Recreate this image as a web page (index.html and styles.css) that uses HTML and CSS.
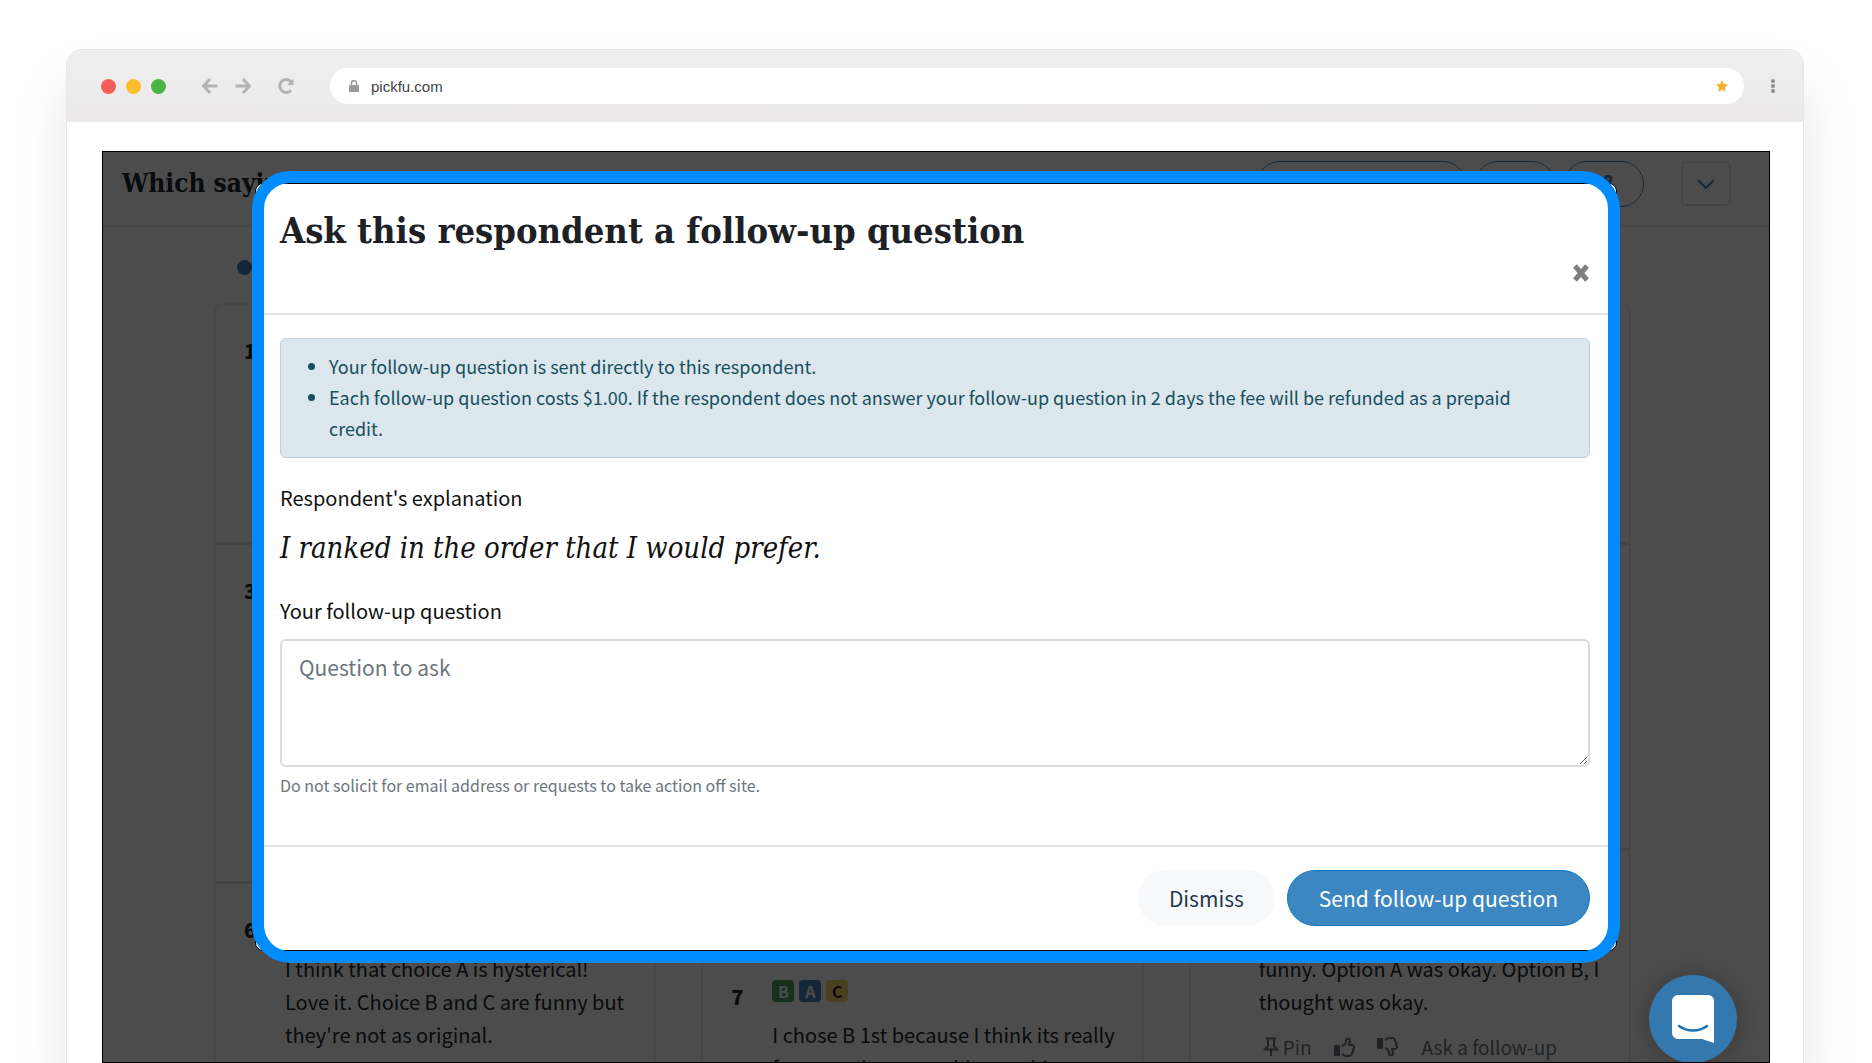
FILE: index.html
```html
<!DOCTYPE html>
<html lang="en">
<head>
  <meta charset="UTF-8" />
  <meta name="viewport" content="width=device-width, initial-scale=1.0" />
  <title>PickFu</title>
  <link rel="stylesheet" href="styles.css">
</head>
<body>
  <div class="browser">
    <div class="toolbar">
      <div class="lights">
        <span class="light red"></span>
        <span class="light yellow"></span>
        <span class="light green"></span>
      </div>
      <div class="nav">
        <button aria-label="Back"><svg width="16" height="16" viewBox="0 0 16 16"><path d="M15.500 8H2M8 1 1.500 8 8 15"/></svg></button>
        <button aria-label="Forward"><svg width="16" height="16" viewBox="0 0 16 16"><path d="M.500 8H14M8 1l6.500 7L8 15"/></svg></button>
        <button class="reload" aria-label="Reload"><svg width="16" height="16" viewBox="0 0 16 16"><path d="M13 12.200A6.400 6.400 0 1 1 13 3.800"/><path class="solid" d="M15.500.500V7H9z"/></svg></button>
      </div>
      <div class="address">
        <svg width="10" height="12" viewBox="0 0 10 12"><rect x="0" y="5" width="10" height="7" rx="1" fill="#999"/><path d="M2.500 5V3.200a2.500 2.500 0 0 1 5 0V5" fill="none" stroke="#999" stroke-width="1.500"/></svg>
        <input type="text" value="pickfu.com" aria-label="Address">
        <svg width="12" height="12" viewBox="0 0 12 12"><path d="M6 0l1.800 3.900 4.200.5-3.100 2.900.8 4.400L6 9.500l-3.700 2.200.8-4.400L0 4.400l4.200-.5z" fill="#fbab2e"/></svg>
      </div>
      <button class="menu" aria-label="Menu"><svg width="4" height="16" viewBox="0 0 4 16"><circle cx="2" cy="3" r="2"/><circle cx="2" cy="8" r="2"/><circle cx="2" cy="13" r="2"/></svg></button>
    </div>

    <div class="page">
      <header class="poll-header">
        <h1>Which saying</h1>
        <div class="actions">
          <button class="pill wide" aria-label="Results"></button>
          <button class="pill" aria-label="Save"></button>
          <button class="pill" aria-label="Share"><svg width="24" height="24" viewBox="0 0 24 24"><circle cx="16" cy="4" r="3"/><circle cx="6" cy="12" r="3"/><circle cx="16" cy="20" r="3"/><path d="M9 10l4-4M9 14l4 4"/></svg></button>
          <button class="more" aria-label="More"><svg width="18" height="10" viewBox="0 0 18 10"><path d="M1 1l8 8 8-8"/></svg></button>
        </div>
      </header>

      <main class="responses">
        <div class="legend"><span class="dot"></span></div>
        <div class="columns">
          <div class="column">
            <article class="card first"><b class="num">1</b></article>
            <article class="card third"><b class="num">3</b></article>
            <article class="card">
              <b class="num">6</b>
              <p class="answer lower">I think that choice A is hysterical! Love it. Choice B and C are funny but they're not as original.</p>
            </article>
          </div>
          <div class="column">
            <article class="card upper"></article>
            <article class="card">
              <b class="num">7</b>
              <div class="answer">
                <div class="ranks"><span class="rank b">B</span><span class="rank a">A</span><span class="rank c">C</span></div>
                <p>I chose B 1st because I think its really funny saying something to this to</p>
              </div>
            </article>
          </div>
          <div class="column">
            <article class="card first"></article>
            <article class="card fifth"></article>
            <article class="card last">
              <div class="answer">
                <p>funny. Option A was okay. Option B, I thought was okay.</p>
                <div class="tools">
                  <button><svg width="16" height="20" viewBox="0 0 16 20"><path d="M3 1.500h10M5 2v7l-3 3.500h12L11 9V2M8 12.500V19"/></svg>Pin</button>
                  <button aria-label="Like"><svg width="21" height="20" viewBox="0 0 21 20"><rect class="solid" x="0" y="8" width="6" height="11" rx="1"/><path d="M8 9c3-1 4-3 4-5 0-3 4-3 4 0 0 2-1 3-1 4h3c2 0 3 2 1 4 1 2 0 3-1 4 0 2-1 3-3 3h-3c-2 0-3-1-4-2"/></svg></button>
                  <button aria-label="Dislike"><svg width="21" height="20" viewBox="0 0 21 20"><rect class="solid" x="0" y="1" width="6" height="11" rx="1"/><path d="M8 3c1-1 2-2 4-2h3c2 0 3 1 3 3 1 1 2 2 1 4 2 2 1 4-1 4h-3c0 1 1 2 1 4 0 3-4 3-4 0 0-2-1-4-4-5"/></svg></button>
                  <a href="#">Ask a follow-up</a>
                </div>
              </div>
            </article>
          </div>
        </div>
      </main>

      <div class="backdrop"></div>

      <section class="modal" role="dialog" aria-labelledby="modal-title">
        <div class="modal-header">
          <h2 id="modal-title">Ask this respondent a follow-up question</h2>
          <button class="close" aria-label="Close"><svg width="18" height="18" viewBox="0 0 18 18"><path d="M3 2l12 14M15 2L3 16"/></svg></button>
        </div>
        <div class="modal-body">
          <ul class="alert">
            <li>Your follow-up question is sent directly to this respondent.</li>
            <li>Each follow-up question costs $1.00. If the respondent does not answer your follow-up question in 2 days the fee will be refunded as a prepaid credit.</li>
          </ul>
          <p class="label">Respondent's explanation</p>
          <blockquote>I ranked in the order that I would prefer.</blockquote>
          <label class="label" for="question">Your follow-up question</label>
          <textarea id="question" placeholder="Question to ask"></textarea>
          <p class="help">Do not solicit for email address or requests to take action off site.</p>
        </div>
        <div class="modal-footer">
          <button class="btn light-btn">Dismiss</button>
          <button class="btn primary">Send follow-up question</button>
        </div>
      </section>

      <button class="chat" aria-label="Open chat"><svg width="42" height="48" viewBox="0 0 42 48"><path d="M6 0h30a6 6 0 0 1 6 6v42l-12-4H6a6 6 0 0 1-6-6V6a6 6 0 0 1 6-6z" fill="#fff"/><path d="M7 31c8 6 20 6 28 0" fill="none" stroke="#1c72b4" stroke-width="2.500" stroke-linecap="round"/></svg></button>
    </div>
  </div>
</body>
</html>
```
FILE: styles.css
```css
:root {
  --blue: #3c87c2;
  --ring: #008cff;
  --line: #e3e6e9;
  --sans: "Noto Sans CJK SC", "Open Sans", sans-serif;
  --serif: "DejaVu Serif Condensed", "DejaVu Serif", serif;
}

* {
  box-sizing: border-box;
}
body {
  margin: 0;
  height: 100vh;
  padding: 49px 68px 0 66px;
  overflow: hidden;
  background: #fff;
  font-family: var(--sans);
}
button {
  font-family: inherit;
  background: none;
  border: none;
  padding: 0;
  cursor: pointer;
}
svg {
  display: block;
}
h1, h2, p, ul, blockquote {
  margin: 0;
}

/* --- browser --- */
.browser {
  display: flex;
  flex-direction: column;
  height: 100%;
  border: 1px solid #e6e6e6;
  border-bottom: none;
  border-radius: 16px 16px 0 0;
  box-shadow: 0 36px 56px rgba(0, 0, 0, 0.1);
  background: #fff;
}
.toolbar {
  display: flex;
  align-items: center;
  flex: none;
  height: 72px;
  padding: 0 28px 0 34px;
  border-radius: 15px 15px 0 0;
  background: linear-gradient(#f0efef, #ebe9ea);
}
.lights {
  display: flex;
  gap: 10px;
}
.light {
  width: 15px;
  height: 15px;
  border-radius: 50%;
}
.red { background: #f25f58; }
.yellow { background: #fdbe2d; }
.green { background: #4bb543; }
.nav {
  display: flex;
  gap: 17px;
  margin-left: 36px;
}
.nav svg {
  fill: none;
  stroke: #b3b3b3;
  stroke-width: 3;
}
.nav .solid {
  fill: #b3b3b3;
  stroke: none;
}
.nav .reload {
  margin-left: 10px;
}
.address {
  display: flex;
  align-items: center;
  flex: 1;
  height: 36px;
  margin: 0 27px 0 36px;
  padding: 0 16px 0 19px;
  border-radius: 18px;
  background: #fff;
}
.address input {
  flex: 1;
  border: none;
  padding: 0 12px;
  background: none;
  outline: none;
  color: #444;
  font: 15px "Liberation Sans", Arial, sans-serif;
}
.menu svg {
  fill: #8c8c8c;
}

/* --- page behind the modal --- */
.page {
  position: relative;
  flex: 1;
  min-height: 0;
  margin: 29px 33px 0 35px;
  border: 1px solid #000;
  overflow: hidden;
  color: #212529;
}
.poll-header {
  display: flex;
  justify-content: space-between;
  height: 75px;
  padding: 9px 38px 0 19px;
  border-bottom: 2px solid #e9ecef;
}
.poll-header h1 {
  font: bold 26px/44px var(--serif);
}
.actions {
  display: flex;
  gap: 9px;
}
.pill {
  display: flex;
  justify-content: center;
  width: 80px;
  height: 46px;
  padding-top: 13px;
  border: 1px solid var(--blue);
  border-radius: 23px;
}
.pill.wide {
  width: 209px;
}
.actions svg {
  fill: none;
  stroke: var(--blue);
  stroke-width: 3;
}
.actions .more {
  display: flex;
  align-items: center;
  justify-content: center;
  width: 50px;
  height: 45px;
  margin-left: 28px;
  border: 2px solid #e2e5e8;
  border-radius: 5px;
}
.more svg {
  stroke-width: 2;
}
.responses {
  padding: 33px 138px 0 111px;
}
.legend {
  height: 43px;
  padding-left: 23px;
}
.dot {
  display: block;
  width: 15px;
  height: 15px;
  border-radius: 50%;
  background: var(--blue);
}
.columns {
  display: grid;
  grid-template-columns: repeat(3, 1fr);
  gap: 45px;
  height: 800px;
}
.column {
  display: flex;
  flex-direction: column;
  border: 2px solid #eceef0;
  border-radius: 8px;
}
.card {
  display: flex;
  padding: 29px 20px 0 28px;
  font-size: 20px;
  line-height: 33px;
}
.card + .card {
  border-top: 3px solid #e2e5e8;
}
.first { height: 237px; }
.third { height: 339px; }
.fifth { height: 306px; }
.upper { height: 643px; }
.num {
  flex: none;
  width: 41px;
  font-weight: 900;
}
.lower {
  padding-top: 39px;
  padding-right: 8px;
}
.last {
  padding: 101px 10px 0 68px;
}
.ranks {
  display: flex;
  gap: 5px;
  padding-bottom: 16px;
}
.rank {
  width: 22px;
  height: 22px;
  border-radius: 4px;
  text-align: center;
  font-size: 16px;
  font-weight: bold;
  line-height: 22px;
  color: #fff;
}
.rank.b { background: #46a35f; }
.rank.a { background: var(--blue); }
.rank.c { background: #f7d667; color: #212529; }
.tools {
  display: flex;
  align-items: center;
  gap: 22px;
  height: 33px;
  margin-top: 12px;
  padding-left: 4px;
}
.tools button {
  display: flex;
  align-items: center;
  gap: 4px;
}
.tools a,
.tools button {
  color: #6c757d;
  font-size: 19px;
  text-decoration: none;
}
.tools svg {
  fill: none;
  stroke: #6c757d;
  stroke-width: 2;
}
.tools .solid {
  fill: #6c757d;
  stroke: none;
}
.tools a {
  margin-left: 2px;
}
.backdrop {
  position: absolute;
  inset: 0;
  background: rgba(0, 0, 0, 0.7);
}

/* --- modal --- */
.modal {
  position: absolute;
  top: 31px;
  left: 152px;
  right: 152px;
  border: 1px solid #000;
  border-radius: 8px;
  background: #fff;
}
.modal::after {
  content: "";
  position: absolute;
  inset: -13px -4px;
  border: 12px solid var(--ring);
  border-radius: 38px;
  pointer-events: none;
}
.modal-header {
  display: flex;
  justify-content: space-between;
  height: 131px;
  padding: 19px 26px 0 24px;
  border-bottom: 2px solid var(--line);
}
.modal-header h2 {
  font: bold 36px/54px var(--serif);
  color: #1d2125;
}
.close {
  align-self: flex-start;
  margin-top: 61px;
}
.close svg {
  stroke: #7f7f7f;
  stroke-width: 5;
}
.modal-body {
  padding: 23px 26px 47px 24px;
}
.alert {
  padding: 12px 32px 13px 48px;
  border: 1px solid #bdd0de;
  border-radius: 6px;
  background: #dce6ed;
  color: #16505c;
  font-size: 18px;
  line-height: 31px;
}
.label {
  display: block;
  margin-top: 24px;
  color: #111;
  font-size: 20px;
  line-height: 32px;
}
blockquote {
  margin-top: 11px;
  color: #111;
  font: italic 29px/46px var(--serif);
}
textarea {
  display: block;
  width: 100%;
  height: 128px;
  margin-top: 12px;
  padding: 9px 17px;
  border: 2px solid #d7dce1;
  border-radius: 6px;
  outline: none;
  font: 21px/34px var(--sans);
}
textarea::placeholder {
  color: #6c757d;
}
.help {
  margin-top: 5px;
  color: #6c757d;
  font-size: 16px;
  line-height: 26px;
}
.modal-footer {
  display: flex;
  justify-content: flex-end;
  gap: 12px;
  padding: 23px 26px 24px;
  border-top: 2px solid var(--line);
}
.btn {
  height: 56px;
  padding: 0 31px;
  border-radius: 28px;
  font-size: 21px;
}
.light-btn {
  background: #f8f9fb;
  color: #24384f;
}
.primary {
  border: 1px solid #0f78bd;
  background: var(--blue);
  color: #fff;
}

/* --- chat --- */
.chat {
  position: absolute;
  right: 32px;
  bottom: -1px;
  display: flex;
  align-items: center;
  justify-content: center;
  width: 88px;
  height: 88px;
  border-radius: 50%;
  background: #3478b0;
  box-shadow: 0 2px 30px rgba(0, 0, 0, 0.25);
}
```
